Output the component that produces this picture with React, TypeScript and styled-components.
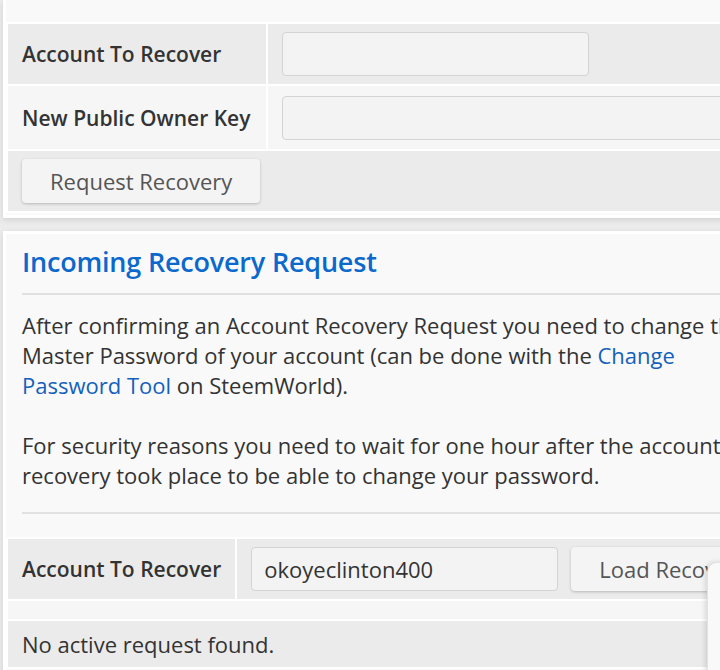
import React from "react";
import styled, { createGlobalStyle } from "styled-components";

const GlobalStyle = createGlobalStyle`
  html, body {
    margin: 0;
    padding: 0;
    background: #ececec;
    overflow: hidden;
    font-family: "Open Sans", "Noto Sans", sans-serif;
    color: #333;
  }
  * { box-sizing: border-box; }
`;

const Page = styled.div`
  width: 787px;
  padding-left: 3px;
  display: flex;
  flex-direction: column;
  gap: 13px;
`;

const Card = styled.section<{ $clipped?: boolean }>`
  background: #f9f9f9;
  border: 3px solid #fff;
  border-top: ${(p) => (p.$clipped ? "none" : "3px solid #fff")};
  padding-top: ${(p) => (p.$clipped ? "22px" : "8px")};
  padding-bottom: 2px;
  box-shadow: 0 2px 6px rgba(0, 0, 0, 0.12);
`;

const Table = styled.table`
  width: 100%;
  border-collapse: separate;
  border-spacing: 2px;
  background: #fff;
`;

const Row = styled.tr<{ $light?: boolean; $h?: number }>`
  background: ${(p) => (p.$light ? "#f6f6f6" : "#ebebeb")};
  height: ${(p) => (p.$h ? `${p.$h}px` : "auto")};
`;

const LabelCell = styled.td<{ $w: number }>`
  width: ${(p) => p.$w + 28}px;
  padding: 8px 14px;
  font-size: 21px;
  font-weight: 600;
  color: #333;
  white-space: nowrap;
  line-height: 30px;
  vertical-align: middle;
`;

const Cell = styled.td<{ $h?: number }>`
  padding: ${(p) => (p.$h !== undefined ? "0" : "8px 14px")};
  height: ${(p) => (p.$h !== undefined ? `${p.$h}px` : "auto")};
  font-size: 22px;
  line-height: 30px;
  color: #333;
  vertical-align: middle;
`;

const FieldGroup = styled.div`
  display: flex;
  gap: 13px;
  align-items: center;
`;

const Input = styled.input<{ $w?: number }>`
  width: ${(p) => (p.$w ? `${p.$w}px` : "100%")};
  height: 44px;
  background: #f3f3f3;
  border: 1px solid #d3d3d3;
  border-radius: 4px;
  padding: 0 12px;
  font-family: "Open Sans", sans-serif;
  font-size: 22px;
  color: #333;
  outline: none;
  display: block;
`;

const Button = styled.button`
  height: 44px;
  padding: 0 28px;
  background: #f4f4f4;
  border: none;
  border-radius: 4px;
  box-shadow: 0 1px 3px rgba(0, 0, 0, 0.22);
  font-family: "Open Sans", sans-serif;
  font-size: 22px;
  color: #555;
  white-space: nowrap;
  display: block;
`;

const Heading = styled.h2`
  margin: 2px 16px 0;
  font-size: 27px;
  line-height: 36px;
  font-weight: 600;
  color: #0b68cc;
  letter-spacing: -0.2px;
`;

const Rule = styled.hr<{ $top: number; $bottom: number }>`
  margin: ${(p) => p.$top}px 16px ${(p) => p.$bottom}px;
  border: none;
  border-top: 2px solid #e1e1e1;
`;

const Para = styled.p`
  margin: 0 16px 30px;
  font-size: 22px;
  line-height: 30px;
  color: #333;
  &:last-of-type { margin-bottom: 0; }
`;

const Link = styled.a`
  color: #1460bb;
  text-decoration: none;
`;

const Floating = styled.div`
  position: fixed;
  left: 707px;
  top: 562px;
  width: 60px;
  height: 160px;
  background: #f9f9f9;
  border: 1px solid #e2e2e2;
  border-radius: 10px;
  box-shadow: -2px 0 5px rgba(0, 0, 0, 0.12);
`;

export default function App() {
  return (
    <>
      <GlobalStyle />
      <Page>
        <Card $clipped>
          <Table>
            <tbody>
              <Row>
                <LabelCell $w={230}>Account To Recover</LabelCell>
                <Cell>
                  <Input $w={307} />
                </Cell>
              </Row>
              <Row $light $h={63}>
                <LabelCell $w={230}>New Public Owner Key</LabelCell>
                <Cell>
                  <Input />
                </Cell>
              </Row>
              <Row>
                <Cell colSpan={2}>
                  <Button>Request Recovery</Button>
                </Cell>
              </Row>
            </tbody>
          </Table>
        </Card>
        <Card>
          <Heading>Incoming Recovery Request</Heading>
          <Rule $top={13} $bottom={15} />
          <Para>
            After confirming an Account Recovery Request you need to change the
            Master Password of your account (can be done with the{" "}
            <Link href="#">Change Password Tool</Link> on SteemWorld).
          </Para>
          <Para>
            For security reasons you need to wait for one hour after the account
            recovery took place to be able to change your password.
          </Para>
          <Rule $top={22} $bottom={23} />
          <Table>
            <tbody>
              <Row>
                <LabelCell $w={199}>Account To Recover</LabelCell>
                <Cell>
                  <FieldGroup>
                    <Input $w={307} defaultValue="okoyeclinton400" />
                    <Button>Load Recovery Request</Button>
                  </FieldGroup>
                </Cell>
              </Row>
              <Row $light>
                <Cell colSpan={2} $h={18} />
              </Row>
              <Row>
                <Cell colSpan={2}>No active request found.</Cell>
              </Row>
            </tbody>
          </Table>
        </Card>
      </Page>
      <Floating />
    </>
  );
}
